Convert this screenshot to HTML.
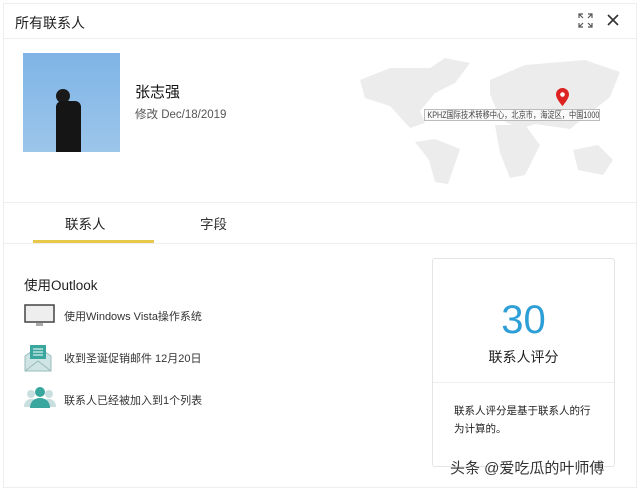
<!DOCTYPE html>
<html><head><meta charset="utf-8"><style>
*{margin:0;padding:0;box-sizing:border-box}
body{width:640px;height:491px;background:#fff;font-family:"Liberation Sans","Noto Sans CJK SC",sans-serif;color:#222;position:relative;overflow:hidden}
.frame{position:absolute;left:3px;top:3px;width:634px;height:485px;border:1px solid #eee;}
.abs{position:absolute}
.hl{position:absolute;left:4px;width:632px;height:1px;background:#eee}
</style></head><body>
<div class="frame"></div>
<div class="abs" style="left:15px;top:13px;font-size:14px">所有联系人</div>
<svg class="abs" style="left:578px;top:13px" width="15" height="15" viewBox="0 0 15 15" fill="none" stroke="#555" stroke-width="1.2"><path d="M1 5V1h4M1 1l4 4M10 1h4v4M14 1l-4 4M1 10v4h4M1 14l4-4M14 10v4h-4M14 14l-4-4"/></svg>
<svg class="abs" style="left:607px;top:14px" width="12" height="12" viewBox="0 0 12 12" stroke="#333" stroke-width="1.6"><path d="M1 1l10 10M11 1L1 11"/></svg>
<div class="hl" style="top:38px"></div>
<div class="abs" style="left:23px;top:53px;width:97px;height:99px;background:linear-gradient(#7fb4e6,#9cc6ea)">
<div class="abs" style="left:33px;top:36px;width:14px;height:14px;border-radius:50%;background:#1a1a1a"></div>
<div class="abs" style="left:33px;top:48px;width:25px;height:51px;background:#151515;border-radius:6px 6px 0 0"></div>
</div>
<div class="abs" style="left:135px;top:81px;font-size:15px;color:#111">张志强</div>
<div class="abs" style="left:135px;top:106px;font-size:11.5px;color:#555">修改 Dec/18/2019</div>
<svg class="abs" style="left:355px;top:50px" width="265" height="135" viewBox="0 0 265 135" fill="#ececec">
<path d="M5 30l30-12 40 0 15-10 25 5-15 20-20 10-15 18 5 12-15 5-20-22-25-8z"/>
<path d="M60 92l20-3 25 10-12 35-13-2-6-22z"/>
<path d="M135 30l35-15 60-5 35 12-10 25-25 20-15 12-35-5-15 5-20-10-10-25z"/>
<path d="M140 75l30 0 15 20-15 30-15 3-10-25z"/>
<path d="M218 100l25-5 15 15-10 15-25-5z"/>
</svg>
<svg class="abs" style="left:556px;top:88px" width="13" height="18" viewBox="0 0 13 18"><path d="M6.5 0A6.5 6.5 0 0 0 0 6.5C0 11 6.5 18 6.5 18S13 11 13 6.5A6.5 6.5 0 0 0 6.5 0z" fill="#d22"/><circle cx="6.5" cy="6.5" r="2.3" fill="#fff"/></svg>
<div class="abs" style="left:424px;top:109px;width:176px;height:12px;border:1px solid #bbb;background:#fafafa;overflow:hidden"><div style="font-size:9px;line-height:10px;color:#444;white-space:nowrap;transform:scale(0.8,1);transform-origin:0 0;padding-left:3px">KPHZ国际技术转移中心，北京市，海淀区，中国100080</div></div>
<div class="hl" style="top:202px"></div>
<div class="abs" style="left:65px;top:213px;font-size:13.5px">联系人</div>
<div class="abs" style="left:200px;top:213px;font-size:13.5px;color:#333">字段</div>
<div class="abs" style="left:33px;top:240px;width:121px;height:3px;background:#e8c84a"></div>
<div class="hl" style="top:243px"></div>
<div class="abs" style="left:24px;top:274px;font-size:13.5px">使用Outlook</div>
<svg class="abs" style="left:24px;top:304px" width="31" height="24" viewBox="0 0 31 24"><rect x="1" y="1" width="29" height="17" fill="#eee" stroke="#444" stroke-width="1.5"/><rect x="12" y="19" width="7" height="3" fill="#aaa"/></svg>
<div class="abs" style="left:64px;top:308px;font-size:11px;color:#333">使用Windows Vista操作系统</div>
<svg class="abs" style="left:24px;top:344px" width="28" height="28" viewBox="0 0 28 28"><path d="M1 12L14 3l13 9v15H1z" fill="#cfe4e4" stroke="#9bb"/><rect x="6" y="1" width="16" height="14" fill="#3aa79f"/><path d="M9 5h10M9 8h10M9 11h10" stroke="#fff"/><path d="M1 27l13-10 13 10" fill="none" stroke="#9bb"/></svg>
<div class="abs" style="left:64px;top:350px;font-size:11px;color:#333">收到圣诞促销邮件 12月20日</div>
<svg class="abs" style="left:24px;top:386px" width="32" height="22" viewBox="0 0 32 22"><circle cx="7" cy="8" r="4" fill="#c9dede"/><circle cx="25" cy="8" r="4" fill="#c9dede"/><path d="M0 21c0-6 4-8 7-8s7 2 7 8zM18 21c0-6 4-8 7-8s7 2 7 8z" fill="#c9dede"/><circle cx="16" cy="6" r="5" fill="#3aa79f"/><path d="M6 22c0-7 5-10 10-10s10 3 10 10z" fill="#3aa79f"/></svg>
<div class="abs" style="left:64px;top:392px;font-size:11px;color:#333">联系人已经被加入到1个列表</div>
<div class="abs" style="left:432px;top:258px;width:183px;height:209px;border:1px solid #e4e4e4;border-radius:3px"></div>
<div class="abs" style="left:432px;top:297px;width:183px;text-align:center;font-size:40px;color:#2e9fd6;line-height:46px">30</div>
<div class="abs" style="left:432px;top:347px;width:183px;text-align:center;font-size:14px;color:#222">联系人评分</div>
<div class="abs" style="left:433px;top:382px;width:181px;height:1px;background:#eee"></div>
<div class="abs" style="left:454px;top:402px;width:160px;font-size:10.5px;line-height:18px;color:#222">联系人评分是基于联系人的行<br>为计算的。</div>
<div class="abs" style="left:450px;top:457px;font-size:15px;color:#333;text-shadow:0 0 2px #fff">头条 @爱吃瓜的叶师傅</div>
</body></html>
